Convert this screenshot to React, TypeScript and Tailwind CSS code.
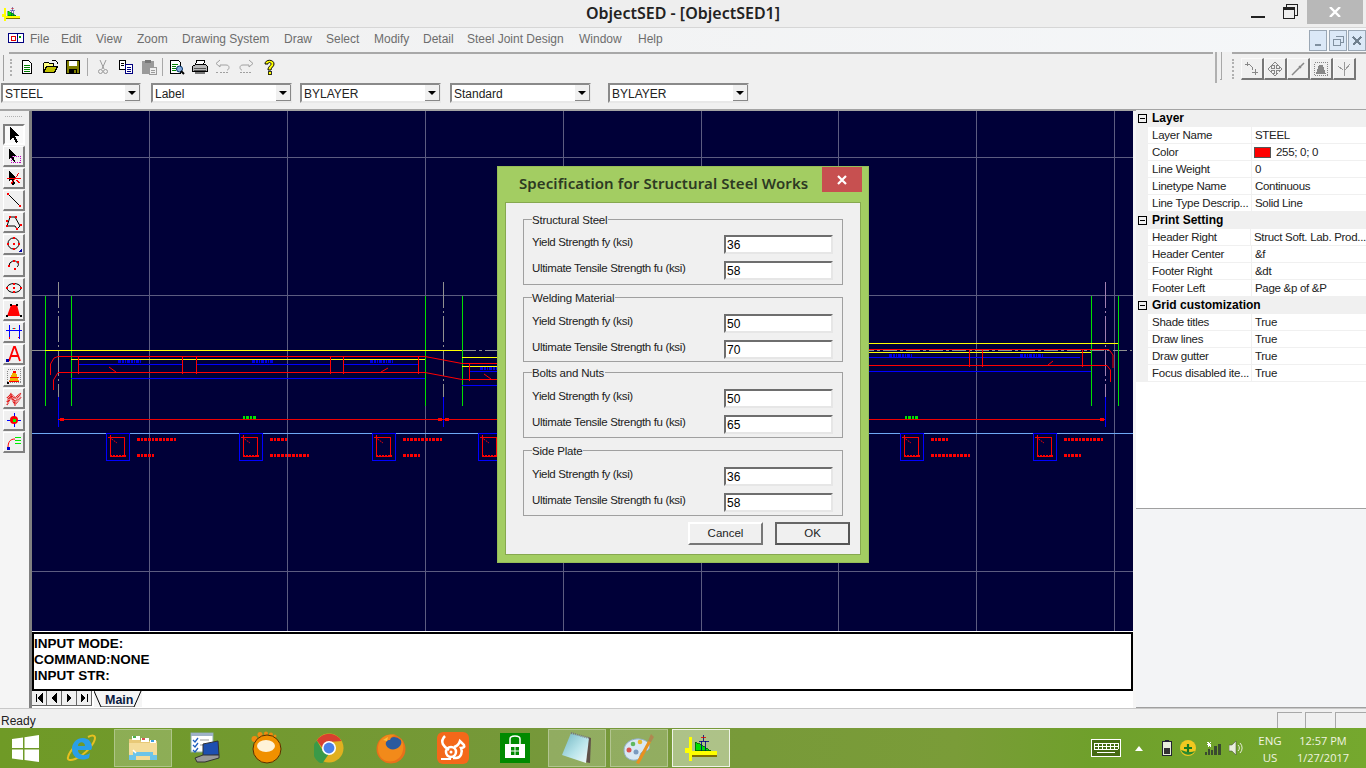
import type { ReactNode } from "react";

/* ── small pixel icons ── */
function Px({ children, size = 16 }: { children: ReactNode; size?: number }) {
  return (
    <svg width={size} height={size} viewBox="0 0 16 16" shapeRendering="crispEdges" fill="none" className="block shrink-0">
      {children}
    </svg>
  );
}

const toolIcons: ReactNode[] = [
  <path d="M4 0v13l3-3 3 6 2-1-3-6h4z" fill="#000" />,
  <>
    <path d="M3 0v11l2-2 3 5 1-1-2-5h3z" fill="#000" />
    <rect x="5.500" y="8.500" width="9" height="6" stroke="#c000c0" strokeDasharray="1 1" />
  </>,
  <>
    <path d="M3 0v11l2-2 3 5 1-1-2-5h3z" fill="#000" />
    <path d="M1 9l14-1M13 3L5 14M10 10l4 3" stroke="#f00" />
    <rect x="6" y="13" width="2" height="2" fill="#000" />
  </>,
  <>
    <path d="M2 2l11 11" stroke="#000" shapeRendering="auto" />
    <rect x="1" y="1" width="2" height="2" fill="#f00" />
    <rect x="13" y="13" width="2" height="2" fill="#f00" />
  </>,
  <>
    <path d="M1 12L4 3h5l5 9-3 3-2-3z" stroke="#000" shapeRendering="auto" />
    <path d="M3 2h2v2H3zM9 2h2v2H9zM0 6h2v2H0zM14 10h2v2h-2zM0 11h2v2H0zM10 14h2v2h-2z" fill="#f00" />
  </>,
  <>
    <circle cx="7.500" cy="7.500" r="5.500" stroke="#000" shapeRendering="auto" />
    <path d="M6.500 1h2v2h-2zM1 6.500h2v2H1zM12 6.500h2v2h-2zM6.500 12h2v2h-2zM6.500 6.500h2v2h-2z" fill="#f00" />
    <path d="M16 12v4h-4z" fill="#00a" />
  </>,
  <>
    <path d="M3 8a5 5 0 0 1 9-3c1 2 0 3-1 4" stroke="#000" shapeRendering="auto" />
    <path d="M2 7h2v2H2zM7 2h2v2H7zM11 3h2v2h-2zM8 10h2v2H8z" fill="#f00" />
  </>,
  <>
    <ellipse cx="8" cy="8" rx="7" ry="4.500" stroke="#000" shapeRendering="auto" />
    <path d="M0 7h2v2H0zM14 7h2v2h-2zM7 3h2v2H7zM7 7h2v2H7zM7 11h2v2H7z" fill="#f00" />
  </>,
  <>
    <path d="M1 14L5 3h6l3 11z" fill="#f00" shapeRendering="auto" />
    <path d="M4 2h2v2H4zM10 2h2v2h-2zM0 13h2v2H0zM14 13h2v2h-2z" fill="#000" />
  </>,
  <>
    <path d="M3 1v14M13 1v14M0 6h16" stroke="#00f" />
    <rect x="6" y="4" width="4" height="1" fill="#0ff" />
    <path d="M7 4h2v1H7zM3 13h1v2H3zM12 13h1v1h-1z" fill="#f00" />
  </>,
  <>
    <path d="M3 15L8 1h1l5 14M5 10h7" stroke="#f00" strokeWidth="1.800" shapeRendering="auto" />
    <path d="M0 16v-3h3v3z" fill="#00a" />
  </>,
  <>
    <rect x="1.500" y="1.500" width="13" height="13" stroke="#888" strokeDasharray="1 1" />
    <path d="M3 13L7 4h3l3 9z" fill="#f0b000" />
    <path d="M3 13h10v1H3z" fill="#f00" />
    <path d="M7 3h3v2H7zM4 9h9v1H4z" fill="#f00" />
    <rect x="1" y="14" width="2" height="2" fill="#000" />
  </>,
  <path d="M1 12L5 4l4 8 6-9M1 8l4-4 4 4 6-5M1 15l4-8 4 8 6-8" stroke="#e00000" strokeDasharray="1 .6" strokeWidth="1.400" shapeRendering="auto" />,
  <>
    <path d="M8 1v14M1 8h14" stroke="#00f" />
    <circle cx="8" cy="8" r="4" fill="#f00" shapeRendering="auto" />
    <rect x="7" y="7" width="3" height="3" fill="#0f0" />
  </>,
  <>
    <path d="M2 14c0-6 2-9 7-9" stroke="#f00" shapeRendering="auto" />
    <path d="M9 3h6v1H9zM9 6h6v1H9zM9 9h6v1H9z" fill="#0e0" />
    <rect x="1" y="13" width="3" height="3" fill="#00c" />
  </>,
];

const barIcons: { key: string; sep?: string; icon: ReactNode }[] = [
  { key: "new", icon: <>
    <path d="M3.500 1.500h6l3 3v10h-9z" fill="#fff" stroke="#000" />
    <path d="M5 6h6M5 8h6M5 10h6M5 12h6" stroke="#008000" />
  </> },
  { key: "open", icon: <>
    <path d="M1.500 13.500v-9l1-1h4l1 1h4v2" stroke="#000" fill="#ffff80" />
    <path d="M1.500 13.500l3-6h11l-3 6z" fill="#c0c000" stroke="#000" />
    <path d="M10 1h3l2 2v2" stroke="#000" />
  </> },
  { key: "save", sep: "mx-[3px]", icon: <>
    <rect x="1.500" y="1.500" width="13" height="13" fill="#808000" stroke="#000" />
    <rect x="4" y="2" width="8" height="5" fill="#fff" />
    <rect x="4" y="10" width="8" height="4" fill="#000" />
    <rect x="9" y="11" width="2" height="3" fill="#808000" />
  </> },
  { key: "cut", icon: <>
    <path d="M5 1l4 9M11 1L7 10" stroke="#9a9a9a" shapeRendering="auto" />
    <circle cx="5.500" cy="12.500" r="2" stroke="#9a9a9a" shapeRendering="auto" />
    <circle cx="10.500" cy="12.500" r="2" stroke="#9a9a9a" shapeRendering="auto" />
  </> },
  { key: "copy", icon: <>
    <path d="M1.500 1.500h6v9h-6z" fill="#fff" stroke="#000" />
    <path d="M3 4h3M3 6h3" stroke="#000" />
    <path d="M7.500 5.500h7v9h-7z" fill="#fff" stroke="#000080" />
    <path d="M9 8h4M9 10h4M9 12h4" stroke="#000080" />
  </> },
  { key: "paste", sep: "mx-[2px]", icon: <>
    <rect x="1" y="2" width="12" height="13" rx="1" fill="#9a9a9a" />
    <rect x="4" y="1" width="6" height="3" fill="#777" />
    <path d="M8.500 8.500h7v7h-7z" fill="#eee" stroke="#9a9a9a" />
    <path d="M10 11h4M10 13h4" stroke="#9a9a9a" />
  </> },
  { key: "preview", icon: <>
    <path d="M1.500 1.500h8l2 2v11h-10z" fill="#fff" stroke="#000" />
    <path d="M3 5h6M3 7h4M3 9h4M3 11h4" stroke="#008000" />
    <circle cx="10.500" cy="10" r="3" fill="#8ad" stroke="#036" shapeRendering="auto" />
    <path d="M12 12l3 3" stroke="#000" strokeWidth="2" shapeRendering="auto" />
  </> },
  { key: "print", icon: <>
    <path d="M4.500 1.500h8l-1 5h-8z" fill="#fff" stroke="#000" />
    <path d="M.500 7.500l3-2h10l2 2v5h-15z" fill="#b8b8b8" stroke="#000" />
    <path d="M2 9h12M2 11h12" stroke="#555" />
    <path d="M3 13h10v1.500H3z" fill="#777" />
  </> },
  { key: "undo", icon: <>
    <path d="M5 1L1 4.500 5 8V6h6c2 0 3 1 3 2.500S13 11 12 11" stroke="#a0a0a0" shapeRendering="auto" />
    <path d="M1 13h2M5 13h9" stroke="#a0a0a0" strokeDasharray="2 1" />
  </> },
  { key: "redo", icon: <>
    <path d="M11 1l4 3.500L11 8V6H5C3 6 2 7 2 8.500S3 11 4 11" stroke="#a0a0a0" shapeRendering="auto" />
    <path d="M2 13h12" stroke="#a0a0a0" strokeDasharray="2 1" />
  </> },
  { key: "help", icon: <>
    <path d="M4 5c0-5 9-5 9 0 0 3-3 3-3 6H7c0-4 3-4 3-6 0-2-3-2-3 0z" fill="#ff0" stroke="#000" shapeRendering="auto" />
    <rect x="7" y="12.500" width="3" height="3" fill="#ff0" stroke="#000" strokeWidth=".8" />
  </> },
];

const rightBtns: ReactNode[] = [
  <path d="M1 3h4M3 1v4M5 3l3 3 1 3M8 11h6M11 8v6M9 13h0" stroke="#888" />,
  <path d="M8 1l3 3H9v3h3V5l3 3-3 3V9H9v3h2l-3 3-3-3h2V9H4v2L1 8l3-3v2h3V4H5z" stroke="#888" fill="#eee" />,
  <path d="M14 2L2 14M9 5l2 2M3 12l1 1" stroke="#888" strokeWidth="1.500" shapeRendering="auto" />,
  <>
    <rect x="1.500" y="1.500" width="13" height="13" stroke="#888" strokeDasharray="1 1" />
    <path d="M3 13L6 4h4l3 9z" fill="#888" />
  </>,
  <path d="M8 1v14M2 5l5 4M14 3L9 9" stroke="#999" />,
];

/* ── canvas drawing, in screen coordinates ── */
const vGrid = [149.5, 287.5, 425.5, 563.5, 701.5, 838.5, 976.5, 1114.5];
const hGrid = [157.5, 295.5, 571.5];
const boxes = [106, 239, 372, 478, 900, 1033];
const labels: [number, number, number][] = [
  [137, 39, 17], [270, 17, 39], [403, 39, 17], [931, 17, 39], [1064, 39, 17],
];

function Section({ x, cx }: { x: number; cx: number }) {
  return (
    <g>
      <path d={`M${cx + 0.5} 282V397`} stroke="#909090" strokeDasharray="26 3 2 3" />
      <path d={`M${cx + 0.5} 397V427`} stroke="#0000ff" />
      <path d={`M${x} 296V406`} stroke="#00e000" />
    </g>
  );
}

function Drawing() {
  return (
    <svg width="1102" height="520" viewBox="32 111 1102 520" className="block" shapeRendering="crispEdges">
      <rect x="32" y="111" width="1102" height="520" fill="#000038" />
      {vGrid.map((x) => <path key={x} d={`M${x} 111V631`} stroke="#5c5c80" />)}
      {hGrid.map((y) => <path key={y} d={`M32 ${y}H1134`} stroke="#5c5c80" />)}
      <path d="M32 433.500H1134" stroke="#6ea8f5" />

      <path d="M32 350.500H45M462 350.500H500M860 350.500H1132" stroke="#909090" strokeDasharray="14 3 3 3" />
      <Section x={45.5} cx={58} />
      <Section x={71.5} cx={58} />
      <Section x={425.5} cx={443} />
      <path d="M462.500 296V406M1091.500 296V406M1118.500 296V406" stroke="#00e000" />
      <path d="M1105.500 282V397" stroke="#a080b0" strokeDasharray="26 3 2 3" />
      <path d="M1105.500 397V427" stroke="#0000ff" />

      <path d="M45 350.500H462M71 359.500H425M869 343.500H1118M869 352.500H1091M462 357.500H500M462 366.500H500" stroke="#ffff00" />
      <path d="M78 364.500H182M196 364.500H330M343 364.500H418M71 378.500H425M469 371.500H500M462 385.500H500M869 357.500H1080M869 371.500H1091" stroke="#0000ff" />

      <g stroke="#ff0000" fill="none">
        <path d="M50.500 375V364L54 358l4-1.500H425L462 363.500H500M53.500 390V380L58 372.500H425L462 379.500H500" shapeRendering="auto" />
        <path d="M78.500 356V374M182.500 356V374M196.500 356V374M330.500 356V374M343.500 356V374M418.500 356V374" />
        <path d="M469.500 363V381" />
        <path d="M869 349.500H1109L1113 355V368M869 365.500H1107L1110.500 370V382" shapeRendering="auto" />
        <path d="M969.500 349V367M982.500 349V367M1082.500 349V367" />
        <path d="M109 367L116 372M381 372L388 368M1048 365L1053 361M484 374L491 379" shapeRendering="auto" />
      </g>
      <rect x="58" y="419" width="442" height="1" fill="#f00000" />
      <rect x="860" y="419" width="245" height="1" fill="#f00000" />
      <path d="M60 418h4v3h-4zM438 418h4v3h-4zM445 418h4v3h-4zM1100 418h4v3h-4z" fill="#ff0000" />

      {[[118, 141], [252, 274], [370, 393], [480, 500], [889, 912], [1020, 1043]].map(([a, b]) => (
        <path key={a} d={`M${a} ${a > 800 ? 355 : a === 480 ? 368 : 361}.5H${b}`} stroke="#0000e0" strokeWidth="3" strokeDasharray="3 1 2 1 1 1" />
      ))}
      {[243, 905].map((x) => (
        <path key={x} d={`M${x} 417H${x + 14}`} stroke="#00e000" strokeWidth="3" strokeDasharray="2 1 3 1" />
      ))}

      {boxes.map((x) => (
        <g key={x}>
          <rect x={x + 0.5} y="433.5" width="23" height="27" fill="#000038" stroke="#0000ff" strokeWidth="1.500" />
          <rect x={x + 4.5} y="437.5" width="14" height="19" fill="none" stroke="#ff0000" strokeWidth="1.200" />
          <path d={`M${x + 3} 437L${x + 11} 443`} stroke="#ff0000" strokeDasharray="2 1" shapeRendering="auto" />
          <path d={`M${x + 4} 435V440M${x + 2} 437H${x + 8}`} stroke="#ff0000" />
          <path d={`M${x + 4} 455.500H${x + 20}`} stroke="#ff0000" strokeWidth="2" strokeDasharray="2 1" />
        </g>
      ))}
      {labels.map(([x, top, bottom]) => (
        <g key={x} stroke="#ff0000" strokeWidth="3" strokeDasharray="3 1 2 1 3 1">
          <path d={`M${x} 439.500H${x + top}`} />
          <path d={`M${x} 455.500H${x + bottom}`} />
        </g>
      ))}
    </svg>
  );
}

/* ── dialog ── */
const specGroups = [
  { title: "Structural Steel", fy: "36", fu: "58", cls: "h-[66px]", rows: "mt-[8px]" },
  { title: "Welding Material", fy: "50", fu: "70", cls: "h-[65px] mt-[12px]", rows: "mt-[9px]" },
  { title: "Bolts and Nuts", fy: "50", fu: "65", cls: "h-[66px] mt-[10px]", rows: "mt-[9px]" },
  { title: "Side Plate", fy: "36", fu: "58", cls: "h-[66px] mt-[12px]", rows: "mt-[9px]" },
];

function SpecRow({ label, value }: { label: string; value: string }) {
  return (
    <div className="flex h-[19px] items-start justify-between">
      <span className="text-[11.5px] leading-[14px] tracking-[-0.35px] text-[#222]">{label}</span>
      <div className="h-[19px] w-[109px] border-2 border-[#e6e6e6] border-l-[#6e6e6e] border-t-[#6e6e6e] bg-white pl-[1px] text-[12px] leading-[17px] text-black">
        {value}
      </div>
    </div>
  );
}

function SpecDialog() {
  return (
    <div className="absolute left-[497px] top-[166px] flex h-[397px] w-[372px] flex-col border border-[#96bd58] bg-[#a3cd62]">
      <div className="flex h-[35px] justify-between">
        <h2 className="ml-[21px] mt-[7px] font-['Noto_Sans',sans-serif] text-[15px] font-semibold leading-[18px] tracking-[0.1px] text-[#2d3a22]">
          Specification for Structural Steel Works
        </h2>
        <div className="mr-[6px] flex h-[25px] w-[40px] items-center justify-center bg-[#c75050]">
          <svg width="12" height="12" viewBox="0 0 12 12"><path d="M2 2l8 8M10 2l-8 8" stroke="#fff" strokeWidth="2.200" /></svg>
        </div>
      </div>
      <div className="mx-[7px] h-[353px] border border-[#86a84f] bg-[#f0f0f0] px-[17px] pt-[16px]">
        {specGroups.map((g) => (
          <div key={g.title} className={`border border-[#a0a0a0] ${g.cls}`}>
            <div className="-mt-[7px] ml-[8px] h-[14px] w-fit bg-[#f0f0f0] pr-px text-[11.5px] leading-[14px] tracking-[-0.2px] text-[#222]">{g.title}</div>
            <div className={`mx-[8px] flex w-[301px] flex-col gap-[7px] ${g.rows}`}>
              <SpecRow label="Yield Strength fy (ksi)" value={g.fy} />
              <SpecRow label="Ultimate Tensile Strength fu (ksi)" value={g.fu} />
            </div>
          </div>
        ))}
        <div className="mr-[-7px] mt-[6px] flex justify-end gap-[12px]">
          <div className="flex h-[23px] w-[75px] items-center justify-center border-2 border-[#777] border-l-white border-t-white text-[11.5px] text-[#222]">Cancel</div>
          <div className="flex h-[23px] w-[75px] items-center justify-center border-2 border-[#666] border-b-[#555] border-r-[#555] bg-[#f0f0f0] text-[11.5px] text-[#222]">OK</div>
        </div>
      </div>
    </div>
  );
}

/* ── property grid ── */
const propSections = [
  { title: "Layer", rows: [["Layer Name", "STEEL"], ["Color", "255; 0; 0"], ["Line Weight", "0"], ["Linetype Name", "Continuous"], ["Line Type Descrip...", "Solid Line"]] },
  { title: "Print Setting", rows: [["Header Right", "Struct Soft. Lab. Prod..."], ["Header Center", "&f"], ["Footer Right", "&dt"], ["Footer Left", "Page &p of &P"]] },
  { title: "Grid customization", rows: [["Shade titles", "True"], ["Draw lines", "True"], ["Draw gutter", "True"], ["Focus disabled ite...", "True"]] },
];

function PropertyGrid() {
  return (
    <div className="-mt-[1px] flex w-[230px] flex-col bg-white">
      <div className="h-[398px]">
        {propSections.map((s) => (
          <div key={s.title}>
            <div className="flex h-[17px] items-center bg-[#f0f0f0] pl-[2px]">
              <div className="flex h-[9px] w-[9px] items-center justify-center border border-black">
                <div className="h-px w-[5px] bg-black" />
              </div>
              <span className="mb-[1px] ml-[5px] text-[12px] font-bold leading-[14px] text-black">{s.title}</span>
            </div>
            {s.rows.map(([name, value]) => (
              <div key={name} className="flex h-[17px] border-b border-[#f0f0f0] bg-[#f0f0f0] pl-[12px]">
                <div className="w-[103px] whitespace-nowrap bg-white pl-[4px] text-[11.5px] leading-[16px] tracking-[-0.25px] text-[#222]">{name}</div>
                <div className="ml-px flex flex-1 items-center whitespace-nowrap bg-white pl-[3px] text-[11.5px] leading-[16px] tracking-[-0.3px] text-[#222]">
                  {name === "Color" && <span className="-ml-[1px] mr-[5px] h-[11px] w-[17px] border border-[#555] bg-[#ff0000]" />}
                  {value}
                </div>
              </div>
            ))}
          </div>
        ))}
      </div>
      <div className="flex-1 border-y border-b-[#a0a0a0] border-t-[#a0a0a0] bg-[#f3f4f6]" />
    </div>
  );
}

/* ── taskbar icons ── */
function WinLogo() {
  return (
    <svg width="27" height="27" viewBox="0 0 27 27">
      <path d="M0 4l11-1.600V13H0zM12.500 2.200L27 0v13H12.500zM0 14.500h11V25L0 23.400zM12.500 14.500H27V27l-14.500-2z" fill="#fff" />
    </svg>
  );
}
function IE() {
  return (
    <svg width="32" height="32" viewBox="0 0 32 32" fill="none">
      <path d="M23 5c4-2 7-2 7 1 0 4-8 16-20 21-5 2-8 1-7-2 1-4 5-9 9-13" stroke="#e8c020" strokeWidth="2" />
      <path d="M26 18H13c0 5 7 7 12 3l-1 5c-8 4-17 0-17-9 0-8 8-13 15-10 3 1 5 5 5 9zm-6-4c0-5-7-5-7 0z" fill="#2a9fe8" />
    </svg>
  );
}
function FolderIcon() {
  return (
    <svg width="32" height="32" viewBox="0 0 32 32">
      <path d="M2 7h10l2 2h16v19H2z" fill="#e8c978" />
      <path d="M5 4h8v4H5z" fill="#fff" /><path d="M6 4h3v2H6z" fill="#4caf50" />
      <path d="M14 6h8v4h-8z" fill="#fff" /><path d="M15 6h3v2h-3z" fill="#d9534f" />
      <path d="M23 8h6v3h-6z" fill="#fff" /><path d="M24 8h3v2h-3z" fill="#3f9fe0" />
      <path d="M2 11h28v17H2z" fill="#f4dc9a" />
      <path d="M6 20h20v3h4v5h-7v-4H9v4H2v-5h4z" fill="#6cc4e8" />
      <path d="M6 18l3 3" stroke="#fff" strokeWidth="1.500" />
    </svg>
  );
}
function ActionIcon() {
  return (
    <svg width="32" height="32" viewBox="0 0 32 32" fill="none">
      <rect x="2" y="1" width="22" height="19" fill="#fff" stroke="#8aa" />
      <rect x="2" y="1" width="22" height="3" fill="#9fb2c8" />
      <path d="M4 8l2 2 3-4M4 13l2 2 3-4M4 18l2 2 3-4" stroke="#1f5fc0" strokeWidth="1.300" />
      <path d="M11 8h9M11 13h4" stroke="#999" />
      <path d="M14 12l15-3 1 14-16 1z" fill="#1d4fb0" stroke="#333" />
      <path d="M6 26l8-3 16 0 0 3-14 4H8z" fill="#999" stroke="#333" />
    </svg>
  );
}
function GomIcon() {
  return (
    <svg width="32" height="34" viewBox="0 0 32 34" fill="none">
      <circle cx="3.500" cy="8" r="3" fill="#f08a10" /><circle cx="9" cy="3.500" r="2.500" fill="#f08a10" />
      <circle cx="15" cy="2.500" r="2" fill="#f08a10" /><circle cx="20" cy="3.500" r="2" fill="#f08a10" />
      <circle cx="24" cy="5" r="1.500" fill="#f08a10" />
      <circle cx="16" cy="18" r="14" fill="#f09000" stroke="#5a3000" />
      <ellipse cx="15" cy="15" rx="9" ry="6" fill="#fff3d8" />
    </svg>
  );
}
function ChromeIcon() {
  return (
    <svg width="30" height="30" viewBox="0 0 32 32">
      <circle cx="16" cy="16" r="15.500" fill="#e0b020" />
      <path d="M3 8A15.500 15.500 0 0 1 29.400 8.500L16 9.500 10 17z" fill="#d8402f" />
      <path d="M3 8L10 20l6 2-7.500 11A15.500 15.500 0 0 1 3 8z" fill="#3a9a48" />
      <circle cx="16" cy="16" r="7.500" fill="#fff" />
      <circle cx="16" cy="16" r="5.800" fill="#4a80e8" />
    </svg>
  );
}
function FirefoxIcon() {
  return (
    <svg width="32" height="32" viewBox="0 0 32 32">
      <circle cx="16" cy="17" r="14.500" fill="#e8701a" />
      <circle cx="19" cy="14" r="9" fill="#2b5a9e" />
      <path d="M3 15C4 6 12 1 21 3c-3 0-5 2-6 5-3 0-5 2-4 5 2 5 9 6 13 2 2-2 3-4 2-8 4 5 3 14-2 19-7 6-17 4-20-4-1-2-1-5-1-7z" fill="#f28a1a" />
      <path d="M8 8l5-3-1 4z" fill="#f6c040" />
    </svg>
  );
}
function UCIcon() {
  return (
    <svg width="32" height="32" viewBox="0 0 32 32" fill="none">
      <rect width="32" height="32" rx="6" fill="#f4681a" />
      <path d="M8 4c-6 6-1 11 4 14M19 20a5 5 0 1 1-10 0 5 5 0 0 1 10 0z" stroke="#fff" strokeWidth="2.500" />
      <circle cx="14" cy="20" r="1.500" fill="#fff" />
      <path d="M17 15c4-1 5-3 6-6l4 4c1 2-1 3-3 3 2 4 0 10-5 10h-3" stroke="#fff" strokeWidth="2.500" />
      <path d="M4 27h10" stroke="#fff" strokeWidth="2" />
    </svg>
  );
}
function StoreIcon() {
  return (
    <svg width="30" height="30" viewBox="0 0 30 30" fill="none">
      <rect width="30" height="30" fill="#008a00" />
      <path d="M5 11h20v14H5z" fill="#fff" />
      <path d="M10 11V6c0-4 10-4 10 0v5" stroke="#fff" strokeWidth="1.500" />
      <path d="M11 14h3.500v3.500H11zM15.500 14H19v3.500h-3.500zM11 18.500h3.500V22H11zM15.500 18.500H19V22h-3.500z" fill="#008a00" />
    </svg>
  );
}
function NotepadIcon() {
  return (
    <svg width="32" height="32" viewBox="0 0 32 32" fill="none">
      <defs>
        <linearGradient id="padFill" x1="0" y1="0" x2="1" y2="1">
          <stop offset="0" stopColor="#6fb4c0" />
          <stop offset=".55" stopColor="#b8e4ea" />
          <stop offset="1" stopColor="#f4fbfc" />
        </linearGradient>
      </defs>
      <path d="M27 5l3 1-1 25-5-1z" fill="#5f5048" />
      <path d="M10 1l18 5-3 25L1 23z" fill="url(#padFill)" />
      <path d="M10 1l18 5" stroke="#777" strokeWidth="2" strokeDasharray="1 1" />
    </svg>
  );
}
function PaintIcon() {
  return (
    <svg width="32" height="32" viewBox="0 0 32 32">
      <path d="M1 18C1 11 9 6 17 7c7 1 11 5 9 10-2 3-6 1-8 4s0 6-5 7C6 29 1 25 1 18z" fill="#d8e8f4" stroke="#90aec8" />
      <circle cx="6" cy="18" r="2.500" fill="#d9534f" /><circle cx="10" cy="12" r="2.300" fill="#5fb85f" />
      <circle cx="17" cy="10" r="2.300" fill="#e8b830" /><circle cx="13" cy="20" r="2.500" fill="#7a9ac0" />
      <path d="M13 31L25 9l3 1-12 22z" fill="#e89020" />
      <path d="M25 9l3-7 3 3-3 5z" fill="#b08850" />
    </svg>
  );
}
function ObjIcon({ size = 32 }: { size?: number }) {
  return (
    <svg width={size} height={size * 0.8} viewBox="0 0 40 32" shapeRendering="crispEdges">
      <path d="M5 3h4v29H5zM0 16h5v6H0zM9 20h31v5H9z" fill="#ffff00" />
      <path d="M9 25h31v2H9z" fill="#807000" />
      <path d="M13 20V9l7 3 8 5 4 3z" fill="#00e000" stroke="#006000" />
      <path d="M20 8v12M26 8v12M17 8h13M23 0v8" stroke="#000080" />
      <path d="M20 3h6" stroke="#e00000" />
      <path d="M2 19h1v1H2z" fill="#000" />
    </svg>
  );
}

const taskItems = [
  { key: "ie", icon: <IE />, state: "" },
  { key: "explorer", icon: <FolderIcon />, state: "open" },
  { key: "action", icon: <ActionIcon />, state: "" },
  { key: "gom", icon: <GomIcon />, state: "" },
  { key: "chrome", icon: <ChromeIcon />, state: "" },
  { key: "firefox", icon: <FirefoxIcon />, state: "" },
  { key: "uc", icon: <UCIcon />, state: "" },
  { key: "store", icon: <StoreIcon />, state: "" },
  { key: "notepad", icon: <NotepadIcon />, state: "open" },
  { key: "paint", icon: <PaintIcon />, state: "open" },
  { key: "obj", icon: <ObjIcon />, state: "active" },
];

const menus = [
  { label: "File", cls: "w-[31px]" },
  { label: "Edit", cls: "w-[35px]" },
  { label: "View", cls: "w-[41px]" },
  { label: "Zoom", cls: "w-[45px]" },
  { label: "Drawing System", cls: "w-[102px]" },
  { label: "Draw", cls: "w-[42px]" },
  { label: "Select", cls: "w-[48px]" },
  { label: "Modify", cls: "w-[49px]" },
  { label: "Detail", cls: "w-[44px]" },
  { label: "Steel Joint Design", cls: "w-[112px]" },
  { label: "Window", cls: "w-[59px]" },
  { label: "Help", cls: "w-[40px]" },
];

const combos = [
  { text: "STEEL", cls: "ml-[1px] w-[140px]" },
  { text: "Label", cls: "ml-[10px] w-[141px]" },
  { text: "BYLAYER", cls: "ml-[8px] w-[141px]" },
  { text: "Standard", cls: "ml-[9px] w-[141px]" },
  { text: "BYLAYER", cls: "ml-[17px] w-[141px]" },
];

export default function App() {
  return (
    <div className="relative flex h-[768px] w-[1366px] flex-col overflow-hidden bg-white font-['Liberation_Sans',sans-serif] text-[12px]">
      {/* title bar */}
      <div className="relative flex h-[28px] shrink-0 items-start justify-center border-b border-[#d6d6d6] bg-[#eeeeee]">
        <div className="absolute left-[2px] top-[7px]"><ObjIcon size={18} /></div>
        <span className="mt-[3px] font-['Noto_Sans',sans-serif] text-[16px] font-semibold leading-[20px] text-[#222]">ObjectSED - [ObjectSED1]</span>
        <div className="absolute right-[3px] top-0 flex items-start">
          <div className="mr-[18px] mt-[16px] h-[2px] w-[14px] bg-[#222]" />
          <div className="relative mr-[9px] mt-[4px] h-[15px] w-[15px]">
            <div className="absolute right-0 top-0 h-[12px] w-[12px] border border-[#222]" />
            <div className="absolute bottom-0 left-0 h-[12px] w-[12px] border border-[#222] border-t-[3px] bg-[#eeeeee]" />
          </div>
          <div className="flex h-[24px] w-[56px] items-center justify-center bg-[#b8b8b8]">
            <svg width="12" height="10" viewBox="0 0 12 10"><path d="M1 0l10 10M11 0L1 10" stroke="#fff" strokeWidth="2.400" /></svg>
          </div>
        </div>
      </div>

      {/* menu bar */}
      <div className="flex h-[24px] shrink-0 items-center bg-[linear-gradient(90deg,#f0f0f0,#f5f7f9)] pl-[8px]">
        <svg width="16" height="12" viewBox="0 0 16 12" shapeRendering="crispEdges" className="mb-[2px] mr-[6px] shrink-0">
          <rect x="0" y="0" width="16" height="10" fill="#000080" />
          <rect x="1" y="1" width="8" height="8" fill="#fff" />
          <rect x="3" y="3" width="4" height="4" fill="none" stroke="#e00000" />
          <rect x="10" y="1" width="5" height="8" fill="#fff" />
          <rect x="11" y="3" width="2" height="2" fill="#00a000" />
        </svg>
        {menus.map((m) => (
          <span key={m.label} className={`mb-[2px] shrink-0 text-[12px] text-[#6d6d6d] ${m.cls}`}>{m.label}</span>
        ))}
        <div className="ml-auto flex h-[22px] gap-[1.5px] self-end">
          {[
            <path d="M3 9h6v2H3z" fill="#8090a0" />,
            <path d="M4 1.500h7v6H9M1.500 4.500h7v6h-7z" stroke="#8090a0" fill="none" />,
            <path d="M2 2l8 8M10 2l-8 8" stroke="#70808f" strokeWidth="2" fill="none" />,
          ].map((p, i) => (
            <div key={i} className="flex h-[21px] w-[18px] items-center justify-center border border-[#9aa7b5] bg-[#dbe8f7]">
              <svg width="12" height="12" viewBox="0 0 12 12" shapeRendering="crispEdges">{p}</svg>
            </div>
          ))}
        </div>
      </div>

      {/* toolbar */}
      <div className="flex h-[31px] shrink-0 bg-[#f0f0f0]">
        <div className="ml-[3px] mt-[3px] h-[26px] w-[2px] border-l border-[#a0a0a0]" />
        <div className="flex w-[1208px] flex-col">
          <div className="ml-[4px] h-[2px] border-t-2 border-[#a8a8a8]" />
          <div className="ml-[5px] mt-[2px] flex items-center">
            <div className="mr-[3px] h-[17px] w-[2px] border-l-2 border-dotted border-[#b0b0b0]" />
            {barIcons.map((b) => (
              <div key={b.key} className="flex items-center">
                <div className="flex h-[22px] w-[23px] items-center justify-center"><Px>{b.icon}</Px></div>
                {b.sep && <div className={`h-[18px] w-px bg-[#a8a8a8] ${b.sep}`} />}
              </div>
            ))}
          </div>
        </div>
        <div className="ml-[2px] h-[31px] w-[2px] bg-[#b0b0b0]" />
        <div className="ml-[3px] h-[28px] w-[2px] border-b border-r border-[#a8a8a8]" />
        <div className="ml-[10px] flex flex-1 flex-col">
          <div className="h-[2px] border-t-2 border-[#a8a8a8]" />
          <div className="mt-[4px] flex items-center">
            <div className="mr-[7px] h-[20px] w-[2px] border-l-2 border-dotted border-[#b0b0b0]" />
            {rightBtns.map((icon, i) => (
              <div key={i} className="flex h-[22px] w-[23px] items-center justify-center border-b-2 border-l border-r-2 border-t border-[#777] border-l-[#fafafa] border-t-[#fafafa]">
                <Px>{icon}</Px>
              </div>
            ))}
          </div>
        </div>
      </div>

      {/* combo row */}
      <div className="flex h-[26px] shrink-0 items-start bg-[#f0f0f0]">
        {combos.map((c) => (
          <div key={c.cls} className={`flex h-[20px] shrink-0 items-center border-2 border-[#e8e8e8] border-l-[#8a8a8a] border-t-[#8a8a8a] bg-white ${c.cls}`}>
            <span className="flex-1 pl-[2px] pt-[2px] text-[12px] leading-[14px] text-[#222]">{c.text}</span>
            <div className="-mr-[1px] flex h-[16px] w-[15px] items-center justify-center border-b border-r border-[#888] bg-[#f0f0f0]">
              <svg width="8" height="4" viewBox="0 0 8 4"><path d="M0 0h8L4 4z" fill="#000" /></svg>
            </div>
          </div>
        ))}
      </div>
      <div className="h-[2px] shrink-0 bg-[#a4a4a4]" />

      {/* main */}
      <div className="flex h-[597px] shrink-0 bg-[#f0f0f0]">
        <div className="flex w-[32px] shrink-0 border-r-[3px] border-[#808080]">
          <div className="flex h-full w-[29px] flex-col bg-[#f5f5f5]">
            <div className="flex h-[349px] flex-col bg-[#f0f0f0] pl-[3px]">
              <div className="mb-[7px] ml-[2px] mt-[5px] h-[1px] w-[17px] border-t border-dotted border-[#b0b0b0]" />
              <div className="flex flex-col gap-[1px]">
                {toolIcons.map((icon, i) => (
                  <div
                    key={i}
                    className={
                      i === 0
                        ? "flex h-[21px] w-[22px] items-center justify-center border-2 border-[#808080] border-b-white border-r-white bg-[#fafafa]"
                        : "flex h-[21px] w-[22px] items-center justify-center border-b-2 border-l border-r-2 border-t border-[#808080] border-l-white border-t-white"
                    }
                  >
                    <Px>{icon}</Px>
                  </div>
                ))}
              </div>
            </div>
          </div>
        </div>

        <div className="flex w-[1101px] shrink-0 flex-col bg-white">
          <div className="h-[520px] overflow-hidden"><Drawing /></div>
          <div className="mt-px h-[59px] border-2 border-black bg-white pt-[2px] text-[13.5px] font-bold leading-[16px] text-black">
            <div>INPUT MODE:</div>
            <div>COMMAND:NONE</div>
            <div>INPUT STR:</div>
          </div>
          <div className="flex h-[17px] items-start">
            {[
              <path d="M2 1v8M8 1L4 5l4 4z" stroke="#000" fill="#000" />,
              <path d="M7 1L3 5l4 4z" stroke="#000" fill="#000" />,
              <path d="M3 1l4 4-4 4z" stroke="#000" fill="#000" />,
              <path d="M8 1v8M2 1l4 4-4 4z" stroke="#000" fill="#000" />,
            ].map((p, i) => (
              <div key={i} className="flex h-[15px] w-[15px] items-center justify-center border-b border-r border-[#666] bg-[#f0f0f0]">
                <svg width="10" height="10" viewBox="0 0 10 10" shapeRendering="crispEdges">{p}</svg>
              </div>
            ))}
            <div className="relative ml-[2px] h-[16px] w-[48px] bg-[#f5f5f5]">
              <svg width="48" height="16" viewBox="0 0 48 16" fill="none" className="absolute left-0 top-0">
                <path d="M0 0l7 16h33l7-16" stroke="#000" />
              </svg>
              <span className="absolute left-[11px] top-[1px] text-[12.5px] font-bold leading-[17px] text-[#0a1a40]">Main</span>
            </div>
          </div>
        </div>

        <div className="w-[3px] shrink-0 bg-[#f5f5f5]" />
        <PropertyGrid />
      </div>

      {/* status bar */}
      <div className="flex h-[20px] shrink-0 items-end border-t border-[#c8c8c8] bg-[#f0f0f0]">
        <span className="-mb-[1px] ml-[1px] text-[12px] leading-[16px] text-[#222]">Ready</span>
        <div className="ml-auto flex gap-[3px]">
          {["w-[25px]", "w-[27px]", "w-[31px]"].map((w) => (
            <div key={w} className={`h-[16px] border-l border-t border-[#a8a8a8] ${w}`} />
          ))}
        </div>
      </div>

      {/* taskbar */}
      <div className="flex h-[40px] shrink-0 items-stretch bg-[linear-gradient(90deg,#6f9a26_0%,#76983a_40%,#7a9c38_70%,#6fa02b_80%,#75a82e_100%)] text-white">
        <div className="flex w-[50px] items-center justify-center"><WinLogo /></div>
        <div className="ml-[2px] flex gap-[4px] py-px">
          {taskItems.map((t) => (
            <div
              key={t.key}
              className={
                t.state === "active"
                  ? "flex w-[58px] items-center justify-center border border-white/80 bg-white/40"
                  : t.state === "open"
                    ? "flex w-[58px] items-center justify-center border border-white/30 bg-white/20"
                    : "flex w-[58px] items-center justify-center"
              }
            >
              {t.icon}
            </div>
          ))}
        </div>
        <div className="ml-auto flex items-center">
          <svg width="30" height="18" viewBox="0 0 30 18" fill="none" shapeRendering="crispEdges" className="mr-[14px]">
            <rect x=".5" y=".5" width="29" height="17" fill="#456a12" stroke="#fff" />
            <path d="M3 4h24M3 7h24M3 10h24M6 13h18M3 4v6M7 4v6M11 4v6M15 4v6M19 4v6M23 4v6M27 4v6" stroke="#fff" />
          </svg>
          <svg width="8" height="5" viewBox="0 0 8 5" className="mr-[19px]"><path d="M0 5l4-5 4 5z" fill="#fff" /></svg>
          <svg width="10" height="16" viewBox="0 0 10 16" fill="none" shapeRendering="crispEdges" className="mr-[8px]">
            <rect x=".5" y="1.500" width="9" height="14" fill="#e8eedc" stroke="#223" />
            <rect x="3" y="0" width="4" height="2" fill="#223" />
            <rect x="2" y="8" width="6" height="6" fill="#333" />
          </svg>
          <svg width="16" height="16" viewBox="0 0 16 16" className="mr-[9px]">
            <circle cx="8" cy="8" r="8" fill="#f0c820" />
            <path d="M1 10a8 8 0 0 0 14 1c-4 2-9 1-14-1z" fill="#2a8a30" />
            <path d="M8 4v8M4 8h8" stroke="#1a7a20" strokeWidth="2.200" />
          </svg>
          <svg width="16" height="14" viewBox="0 0 16 14" shapeRendering="crispEdges" className="mr-[8px]">
            <path d="M0 11h2v3H0zM3 8h2v6H3zM6 9h2v5H6zM9 5h3v9H9zM13 3h3v11h-3z" fill="#3a4a30" />
            <path d="M3 0l1 2 2-1-1 2 2 1-2 1 1 1-2-1-1 1 0-2-2 0 2-1-1-2z" fill="#fff" />
          </svg>
          <svg width="16" height="14" viewBox="0 0 16 14" fill="none" className="mr-[12px]">
            <path d="M0 4h3l4-4v14l-4-4H0z" fill="#e8eedc" stroke="#444" strokeWidth=".5" />
            <path d="M9 4a4 4 0 0 1 0 6M11 2a7 7 0 0 1 0 10" stroke="#e8eedc" />
          </svg>
          <div className="mr-[12px] flex w-[26px] flex-col items-center pt-[1px] font-['Open_Sans',sans-serif] text-[11.5px] leading-[17px] text-[#f0f4e0]">
            <span>ENG</span><span>US</span>
          </div>
          <div className="mr-[15px] flex w-[56px] flex-col items-center whitespace-nowrap pt-[1px] font-['Open_Sans',sans-serif] text-[11px] leading-[17px] text-[#f0f4e0]">
            <span>12:57 PM</span><span>1/27/2017</span>
          </div>
        </div>
      </div>

      <SpecDialog />
    </div>
  );
}
